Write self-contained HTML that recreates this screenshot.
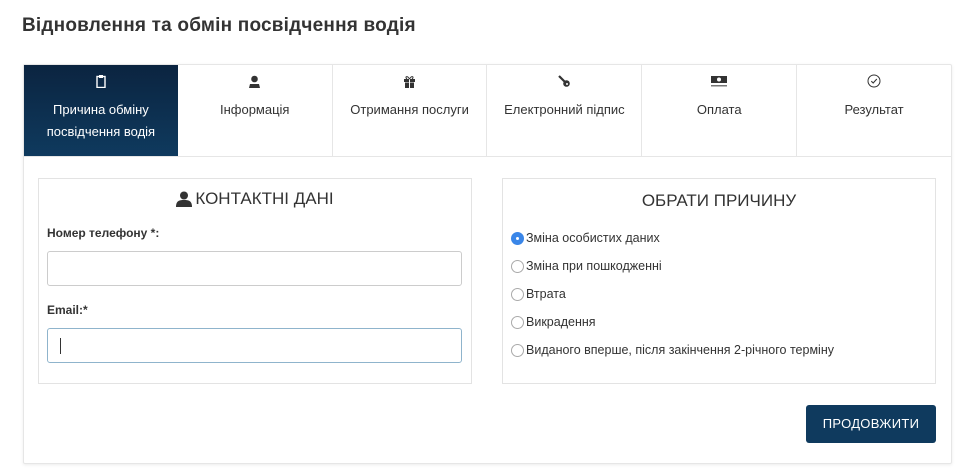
<!DOCTYPE html>
<html><head><meta charset="utf-8"><style>
*{box-sizing:border-box;margin:0;padding:0}
body{width:967px;height:474px;background:#fff;font-family:"Liberation Sans",sans-serif;color:#333;position:relative;overflow:hidden}
h1{position:absolute;left:22px;top:15px;font-size:19px;font-weight:bold;color:#333;letter-spacing:0.2px}
.card{position:absolute;left:23px;top:64px;width:929px;height:400px;border:1px solid #e6e6e6;border-radius:2px;box-shadow:0 1px 3px rgba(0,0,0,.08)}
.tabs{position:absolute;left:0;top:0;width:927px;height:92px;border-bottom:1px solid #e6e6e6;display:flex}
.tab{flex:1;border-right:1px solid #e6e6e6;text-align:center;font-size:13px;color:#333;padding-top:7px;line-height:22px}
.tab:last-child{border-right:none}
.tab.act{background:linear-gradient(180deg,#0b2440,#0f3a5e);color:#fff;border-right:none}
.ic{height:18px;display:flex;justify-content:center;align-items:center;margin-bottom:9px}
.panel{position:absolute;top:113px;width:434px;height:206px;border:1px solid #e3e3e3}
.lbl{position:absolute;left:8px;font-size:12px;font-weight:bold;color:#333}
.inp{position:absolute;left:8px;width:415px;height:35px;border:1px solid #ccc;border-radius:3px}
.rad{position:absolute;left:8px;font-size:12.5px;display:flex;align-items:center;color:#333}
.rad i{display:inline-block;width:13px;height:13px;border-radius:50%;border:1px solid #aaa;margin-right:2px;background:#fff}
.rad i.on{background:#3a86e8;border-color:#3a86e8;position:relative}
.rad i.on:after{content:"";position:absolute;left:4px;top:4px;width:3px;height:3px;border-radius:50%;background:#fff}
.btn{position:absolute;left:782px;top:340px;width:130px;height:38px;background:#0f3a5e;color:#fff;border-radius:3px;font-size:13px;text-align:center;line-height:38px;letter-spacing:.3px}
</style></head><body>
<h1>Відновлення та обмін посвідчення водія</h1>
<div class="card">
<div class="tabs">
<div class="tab act"><div class="ic"><svg width="10" height="13" viewBox="0 0 10 13"><rect x="1" y="1.5" width="8" height="11" fill="none" stroke="#fff" stroke-width="1.4"/><rect x="3" y="0" width="4" height="3" fill="#fff"/></svg></div>Причина обміну<br>посвідчення водія</div>
<div class="tab"><div class="ic"><svg width="11" height="13" viewBox="0 0 11 13"><circle cx="5.5" cy="4" r="3.3" fill="#333"/><path d="M0 13 L1 9 L10 9 L11 13Z" fill="#333"/></svg></div>Інформація</div>
<div class="tab"><div class="ic"><svg width="13" height="13" viewBox="0 0 13 13"><path d="M1 4h11v3H1z M2 7.5h9V13H2z" fill="#333"/><rect x="6" y="4" width="1" height="9" fill="#fff"/><path d="M6.5 4 C4 0,1.5 2,4 4 M6.5 4 C9 0,11.5 2,9 4" stroke="#333" fill="none"/></svg></div>Отримання послуги</div>
<div class="tab"><div class="ic"><svg width="13" height="13" viewBox="0 0 13 13"><path d="M1 1 L7 7" stroke="#333" stroke-width="2.2"/><circle cx="8.5" cy="8.5" r="3.3" fill="#333"/><circle cx="9" cy="9" r="1" fill="#fff"/></svg></div>Електронний підпис</div>
<div class="tab"><div class="ic"><svg width="16" height="12" viewBox="0 0 16 12"><rect x="0" y="1" width="16" height="7" fill="#333"/><circle cx="8" cy="4.5" r="2" fill="#fff"/><rect x="0" y="10" width="16" height="1.5" fill="#777"/></svg></div>Оплата</div>
<div class="tab"><div class="ic"><svg width="14" height="14" viewBox="0 0 14 14"><circle cx="7" cy="7" r="6" fill="none" stroke="#333" stroke-width="1"/><path d="M4.3 7.2 L6.2 9 L9.8 5" fill="none" stroke="#333" stroke-width="1.1"/></svg></div>Результат</div>
</div>
<div class="panel" style="left:14px">
<div style="position:absolute;top:10px;width:100%;text-align:center;font-size:17px;color:#333;display:flex;justify-content:center;align-items:center"><svg width="16" height="16" viewBox="0 0 16 16" style="margin-right:3px"><circle cx="8" cy="4.5" r="4" fill="#333"/><path d="M0 16 C0 10,3 9,8 9 C13 9,16 10,16 16Z" fill="#333"/></svg>КОНТАКТНІ ДАНІ</div>
<div class="lbl" style="top:47px">Номер телефону *:</div>
<div class="inp" style="top:72px"></div>
<div class="lbl" style="top:124px">Email:*</div>
<div class="inp" style="top:149px;border-color:#8fb4cc"><div style="position:absolute;left:12px;top:9px;width:1px;height:16px;background:#333"></div></div>
</div>
<div class="panel" style="left:478px">
<div style="position:absolute;top:12px;width:100%;text-align:center;font-size:17px;color:#333">ОБРАТИ ПРИЧИНУ</div>
<div class="rad" style="top:52px"><i class="on"></i>Зміна особистих даних</div>
<div class="rad" style="top:80px"><i></i>Зміна при пошкодженні</div>
<div class="rad" style="top:108px"><i></i>Втрата</div>
<div class="rad" style="top:136px"><i></i>Викрадення</div>
<div class="rad" style="top:164px"><i></i>Виданого вперше, після закінчення 2-річного терміну</div>
</div>
<div class="btn">ПРОДОВЖИТИ</div>
</div>
</body></html>
